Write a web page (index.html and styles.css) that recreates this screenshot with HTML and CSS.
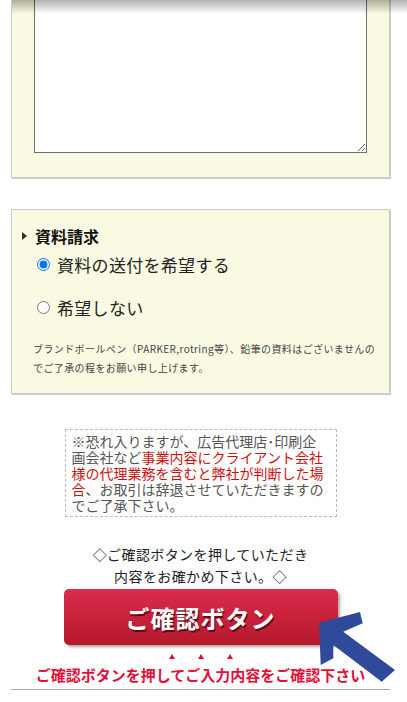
FILE: index.html
```html
<!DOCTYPE html>
<html lang="ja">
<head>
  <meta charset="UTF-8" />
  <meta name="viewport" content="width=device-width, initial-scale=1.0"/>
  <title>お問い合わせ</title>
  <link rel="stylesheet" href="styles.css">
</head>
<body>

  <div class="page">
    <div class="panel panel-message">
      <textarea class="message" name="message"></textarea>
    </div>

    <div class="panel panel-request">
      <h2 class="panel-title">資料請求</h2>
      <label class="choice first"><input type="radio" name="request" checked>資料の送付を希望する</label>
      <label class="choice"><input type="radio" name="request">希望しない</label>
      <p class="note">ブランドボールペン（PARKER,rotring等）、鉛筆の資料はございませんの<br>でご了承の程をお願い申し上げます。</p>
    </div>

    <div class="caution">
      ※恐れ入りますが、広告代理店･印刷企画会社など<span class="red">事業内容にクライアント会社様の代理業務を含むと弊社が判断した場合</span>、お取引は辞退させていただきますのでご了承下さい。
    </div>

    <div class="confirm">
      <p class="confirm-lead">◇ご確認ボタンを押していただき<br>内容をお確かめ下さい。◇</p>
      <div class="button-wrap">
        <button class="confirm-button" type="submit">ご確認ボタン</button>
        <svg class="arrow" width="82" height="76" viewBox="0 0 82 76">
          <polygon points="3,13.7 44,3 46.7,14.3 27.3,22.7 79,61 65.7,72.7 17.3,36 17.3,49.3 4.7,56" fill="#2f4a9b"/>
        </svg>
      </div>
      <div class="marks"><span></span><span></span><span></span></div>
      <p class="confirm-hint">ご確認ボタンを押してご入力内容をご確認下さい</p>
    </div>

    <div class="divider"></div>
  </div>

  <div class="top-shadow"></div>

</body>
</html>
```

FILE: styles.css
```css
body {
  margin: 0;
  font-family: "Noto Sans CJK JP", "Noto Sans", sans-serif;
  background: #fff;
  color: #222;
  overflow: hidden;
}

.page {
  width: 379px;
  margin-left: 11px;
}

.panel {
  background: #fafae3;
  border: 1px solid #ccc;
  box-shadow: 1px 1px 0 #ccc;
}

.panel-message {
  margin-top: -40px;
  padding: 23px 22px 24px;
}

.message {
  display: block;
  box-sizing: border-box;
  width: 100%;
  height: 169px;
  margin: 0;
  border: 1px solid #6e6e6e;
  background: #fff;
}

.panel-request {
  margin-top: 31px;
  padding: 16px 0 16px;
}

.panel-title {
  display: flex;
  align-items: center;
  margin: 0;
  font-size: 16px;
  line-height: 20px;
  font-weight: bold;
  color: #111;
}

.panel-title::before {
  content: "";
  margin: 0 8px 0 10px;
  border-top: 4px solid transparent;
  border-bottom: 4px solid transparent;
  border-left: 5px solid #333;
}

.choice {
  display: flex;
  align-items: center;
  height: 24px;
  margin-top: 19px;
  padding-left: 25px;
  font-size: 17px;
  letter-spacing: 0.3px;
  color: #222;
}

.choice.first {
  margin-top: 6px;
}

.choice input {
  width: 13px;
  height: 13px;
  margin: 0 7px 0 0;
}

.note {
  margin: 20px 0 0;
  padding-left: 21px;
  font-size: 10px;
  line-height: 19px;
  letter-spacing: 0.4px;
  color: #444;
}

.caution {
  width: 252px;
  margin: 35px auto 0;
  padding: 3px 12px 3px 6px;
  border: 1px dashed #bbb;
  font-size: 14px;
  line-height: 16px;
  color: #555;
}

.caution .red {
  color: #cc1111;
}

.confirm {
  margin-top: 26px;
  text-align: center;
}

.confirm-lead {
  margin: 0;
  font-size: 14px;
  line-height: 22px;
  letter-spacing: 0.4px;
  color: #222;
}

.button-wrap {
  position: relative;
  margin-top: 2px;
}

.confirm-button {
  display: block;
  width: 274px;
  height: 56px;
  margin: 0 auto;
  padding: 0;
  border: none;
  border-radius: 5px;
  background: linear-gradient(#dc2b50, #c72039 55%, #b51a2a);
  box-shadow: 2px 2px 3px rgba(0, 0, 0, 0.35);
  font-family: inherit;
  font-size: 24px;
  font-weight: bold;
  letter-spacing: 1px;
  color: #fff;
  text-shadow: 1px 2px 0 rgba(70, 0, 10, 0.75);
}

.arrow {
  position: absolute;
  left: 305px;
  top: 20px;
}

.marks {
  display: flex;
  justify-content: center;
  gap: 23px;
  height: 5px;
  margin-top: 9px;
}

.marks span {
  border-left: 3px solid transparent;
  border-right: 3px solid transparent;
  border-bottom: 5px solid #e0103a;
}

.confirm-hint {
  margin: 6px 0 0;
  font-size: 15px;
  line-height: 20px;
  font-weight: bold;
  color: #e0103a;
}

.divider {
  margin-top: 4px;
  border-top: 1px solid #aaa;
}

.top-shadow {
  position: fixed;
  top: 0;
  left: 12px;
  right: 0;
  height: 14px;
  background: linear-gradient(rgba(0, 0, 0, 0.3), rgba(0, 0, 0, 0));
}
```
